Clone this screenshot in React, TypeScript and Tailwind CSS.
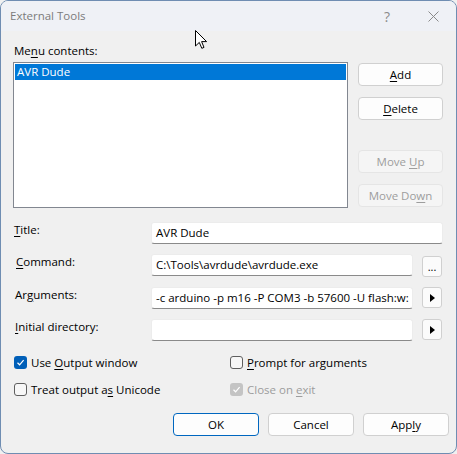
import React from 'react';

const font = "font-['Segoe_UI','Open_Sans','Noto_Sans',sans-serif]";

// 밑줄 표시된 단축키 글자
const Mn = ({ children }: { children: React.ReactNode }) => (
    <span className="underline underline-offset-[2px] decoration-[1px]">{children}</span>
);

const Btn = ({ children, disabled, primary, className = '' }: { children: React.ReactNode; disabled?: boolean; primary?: boolean; className?: string }) => (
    <div
        className={`flex items-center justify-center h-[23px] rounded-[4px] border text-[11.5px] ${
            disabled
                ? 'bg-[#f5f5f5] border-[#e5e5e5] text-[#9d9d9d]'
                : primary
                ? 'bg-[#fdfdfd] border-[#0067c0] text-black'
                : 'bg-[#fdfdfd] border-[#d0d0d0] text-black'
        } ${className}`}
    >
        <span>{children}</span>
    </div>
);

const TextBox = ({ value, className = '' }: { value?: string; className?: string }) => (
    <div className={`h-[22px] bg-white border border-[#ececec] border-b-[#8a8a8a] rounded-[3px] px-[4px] flex items-center text-[11.5px] text-black overflow-hidden whitespace-nowrap ${className}`}>
        {value}
    </div>
);

const SmallBtn = ({ children }: { children: React.ReactNode }) => (
    <div className="w-[20px] h-[21px] rounded-[3px] border border-[#d0d0d0] bg-[#fbfbfb] flex items-center justify-center text-[11px] leading-none">
        {children}
    </div>
);

const Arrow = () => (
    <svg width="5" height="8" viewBox="0 0 5 8">
        <path d="M0 0 L5 4 L0 8 Z" fill="#000" />
    </svg>
);

const Check = ({ checked, disabled }: { checked?: boolean; disabled?: boolean }) => (
    <div
        className={`w-[13px] h-[13px] rounded-[3px] flex items-center justify-center shrink-0 ${
            checked ? (disabled ? 'bg-[#c4c4c4]' : 'bg-[#005fb8]') : 'bg-[#f7f7f7] border border-[#5f5f5f]'
        }`}
    >
        {checked && (
            <svg width="9" height="9" viewBox="0 0 9 9">
                <path d="M1.5 4.8 L3.6 6.8 L7.6 2.2" fill="none" stroke="#fff" strokeWidth="1.2" />
            </svg>
        )}
    </div>
);

const FieldLabel = ({ children, className = '' }: { children: React.ReactNode; className?: string }) => (
    <div className={`h-[22px] text-black leading-none pt-[2px] ${className}`}>{children}</div>
);

export default function App() {
    return (
        <div className={`relative w-[457px] h-[454px] bg-[#f0f0f0] ${font}`}>
            <div className="flex flex-col w-full h-full border border-[#6f8db2] rounded-[8px] overflow-hidden bg-[#f0f0f0]">
                {/* 타이틀 바 */}
                <div className="h-[30px] shrink-0 bg-[#eff1f6] flex items-center pl-[9px] pr-[17px]">
                    <span className="text-[11.5px] text-[#7b7b7b]">External Tools</span>
                    <span className="ml-auto text-[14px] text-[#8a8a8a] mr-[38px]">?</span>
                    <svg width="11" height="11" viewBox="0 0 11 11">
                        <path d="M0.5 0.5 L10.5 10.5 M10.5 0.5 L0.5 10.5" stroke="#8a8a8a" strokeWidth="1" />
                    </svg>
                </div>

                {/* 본문 */}
                <div className="flex flex-col pl-[12px] pr-[13px] pt-[14px] text-[11.5px] text-black">
                    <div className="leading-none h-[17px] pl-[1px]">
                        Me<Mn>n</Mn>u contents:
                    </div>
                    <div className="flex gap-[10px]">
                        <div className="w-[335px] h-[146px] bg-white border border-[#828790] p-[1px]">
                            <div className="bg-[#0078d7] text-white h-[16px] leading-[16px] px-[2px]">AVR Dude</div>
                        </div>
                        <div className="flex flex-col w-[85px]">
                            <Btn className="mt-[1px]">
                                <Mn>A</Mn>dd
                            </Btn>
                            <Btn className="mt-[11px]">
                                <Mn>D</Mn>elete
                            </Btn>
                            <Btn disabled className="mt-[30px]">
                                Move <Mn>U</Mn>p
                            </Btn>
                            <Btn disabled className="mt-[11px]">
                                Move Do<Mn>w</Mn>n
                            </Btn>
                        </div>
                    </div>

                    {/* 입력 필드 */}
                    <div className="grid grid-cols-[138px_1fr] gap-y-[10px] mt-[14px]">
                        <FieldLabel className="pl-[1px]">
                            <Mn>T</Mn>itle:
                        </FieldLabel>
                        <TextBox value="AVR Dude" className="w-[292px]" />

                        <FieldLabel className="pl-[3px]">
                            <Mn>C</Mn>ommand:
                        </FieldLabel>
                        <div className="flex items-start gap-[9px]">
                            <TextBox value="C:\Tools\avrdude\avrdude.exe" className="w-[262px]" />
                            <div className="mt-[2px]">
                                <SmallBtn>...</SmallBtn>
                            </div>
                        </div>

                        <FieldLabel className="pl-[2px]">
                            Ar<Mn>g</Mn>uments:
                        </FieldLabel>
                        <div className="flex items-start gap-[9px]">
                            <TextBox value="-c arduino -p m16 -P COM3 -b 57600 -U flash:w:" className="w-[262px]" />
                            <SmallBtn>
                                <Arrow />
                            </SmallBtn>
                        </div>

                        <FieldLabel className="pl-[2px]">
                            <Mn>I</Mn>nitial directory:
                        </FieldLabel>
                        <div className="flex items-start gap-[9px]">
                            <TextBox className="w-[262px]" />
                            <SmallBtn>
                                <Arrow />
                            </SmallBtn>
                        </div>
                    </div>

                    {/* 체크박스 */}
                    <div className="grid grid-cols-[216px_1fr] gap-y-[14px] mt-[15px] pl-[1px]">
                        <div className="flex items-center gap-[4px] h-[13px]">
                            <Check checked />
                            <span>
                                Use <Mn>O</Mn>utput window
                            </span>
                        </div>
                        <div className="flex items-center gap-[4px] h-[13px]">
                            <Check />
                            <span>
                                <Mn>P</Mn>rompt for arguments
                            </span>
                        </div>
                        <div className="flex items-center gap-[4px] h-[13px]">
                            <Check />
                            <span>
                                Treat output a<Mn>s</Mn> Unicode
                            </span>
                        </div>
                        <div className="flex items-center gap-[4px] h-[13px] text-[#9d9d9d]">
                            <Check checked disabled />
                            <span>
                                Close on <Mn>e</Mn>xit
                            </span>
                        </div>
                    </div>

                    {/* 하단 버튼 */}
                    <div className="flex justify-end gap-[9px] mt-[17px] -mr-[6px]">
                        <Btn primary className="w-[86px]">
                            OK
                        </Btn>
                        <Btn className="w-[86px]">Cancel</Btn>
                        <Btn className="w-[86px]">
                            App<Mn>l</Mn>y
                        </Btn>
                    </div>
                </div>
            </div>

            {/* 마우스 커서 */}
            <svg className="absolute left-[195px] top-[30px]" width="13" height="20" viewBox="0 0 13 20">
                <path d="M0.5 0.5 L0.5 16 L4.3 12.4 L6.8 18.3 L9 17.4 L6.6 11.6 L11.6 11.6 Z" fill="#fff" stroke="#000" strokeWidth="1" strokeLinejoin="round" />
            </svg>
        </div>
    );
}
